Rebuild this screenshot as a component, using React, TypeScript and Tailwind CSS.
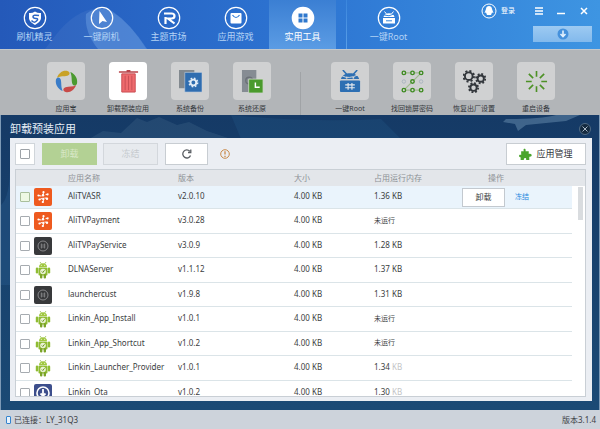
import React from 'react';

interface AppRow {
  name: string;
  version: string;
  memory: string | null;
  icon: 'ali' | 'dark' | 'android' | 'ota';
  selected?: boolean;
  faded?: boolean;
}

const rows: AppRow[] = [
  { name: 'AliTVASR', version: 'v2.0.10', memory: '1.36', icon: 'ali', selected: true },
  { name: 'AliTVPayment', version: 'v3.0.28', memory: null, icon: 'ali' },
  { name: 'AliTVPayService', version: 'v3.0.9', memory: '1.28', icon: 'dark' },
  { name: 'DLNAServer', version: 'v1.1.12', memory: '1.37', icon: 'android' },
  { name: 'launchercust', version: 'v1.9.8', memory: '1.31', icon: 'dark' },
  { name: 'Linkin_App_Install', version: 'v1.0.1', memory: null, icon: 'android' },
  { name: 'Linkin_App_Shortcut', version: 'v1.0.2', memory: null, icon: 'android' },
  { name: 'Linkin_Launcher_Provider', version: 'v1.0.1', memory: '1.34', icon: 'android', faded: true },
  { name: 'Linkin_Ota', version: 'v1.0.2', memory: '1.30', icon: 'ota', faded: true },
];

const RootRobot = () => (
  <>
    <path d="M2 9.500c1-4 5-6 9.500-6s8.500 2 9.500 6z" fill="currentColor" />
    <path d="M4 0l4 4.500M19 0l-4 4.500" stroke="currentColor" strokeWidth="1.600" />
    <path d="M3 6q7 4 17-1" stroke="#d4d6d8" fill="none" />
    <circle cx="8" cy="8" r="1" fill="#d4d6d8" />
    <circle cx="15" cy="8" r="1" fill="#d4d6d8" />
    <rect x="1" y="11" width="21" height="12" rx="1" fill="currentColor" />
    <path d="M9.500 13.500v7M13.500 13.500v7M6.500 15.500h10M6.500 18.500h10" stroke="#e4e8ec" strokeWidth="1.200" />
  </>
);

const Gear = ({ x, y, r }: { x: number; y: number; r: number }) => (
  <g transform={`translate(${x} ${y})`} stroke="#33373c" fill="none">
    <circle r={r} strokeWidth="2" />
    <circle r={r + 1.5} strokeWidth="2" strokeDasharray={`${((r + 1.5) * Math.PI) / 8} ${((r + 1.5) * Math.PI) / 8}`} />
  </g>
);

const tabs = [
  {
    label: '刷机精灵',
    icon: (
      <>
        <path d="M12 5.500q3 2 6 1.500v5c0 3-3 5-6 7-3-2-6-4-6-7V7q3 .500 6-1.500z" fill="#fff" />
        <path d="M16 9.500q-6-1-6 1t3 2 .500 2.500-5-.500" stroke="#2c66c4" strokeWidth="1.500" fill="none" />
      </>
    ),
  },
  { label: '一键刷机', icon: <path d="M9.500 5l7.500 11-4.500-1-3.500 3z" fill="#fff" /> },
  {
    label: '主题市场',
    icon: <path d="M7 7.500h7.500q3 0 3 2.500t-3 2.500H11l6.500 5M8.500 18v-7" stroke="#fff" strokeWidth="2.200" fill="none" />,
  },
  {
    label: '应用游戏',
    icon: (
      <>
        <rect x="6.500" y="7" width="11" height="10.500" rx="1" fill="#fff" />
        <path d="M8.500 9q3.500 5 7 0" stroke="#2f7ad6" strokeWidth="1.200" fill="none" />
      </>
    ),
  },
  {
    label: '实用工具',
    active: true,
    icon: <path d="M7.500 7.500h4v4h-4zM12.500 7.500h4v4h-4zM7.500 12.500h4v4h-4zM12.500 12.500h4v4h-4z" fill="#2f78cd" />,
  },
];

const rootTabIcon = (
  <>
    <path d="M6.500 11c1-5 10-5 11 0zM6 12h12v5.500H6z" fill="#fff" />
    <path d="M7.500 5.500l2 2.500M16.500 5.500l-2 2.500" stroke="#fff" />
    <path d="M7 9q5 2 10-1M9 14.800h6" stroke="#3586dc" fill="none" />
  </>
);

const NavTab = ({ label, icon, active }: { label: string; icon: React.ReactNode; active?: boolean }) => (
  <button
    className={
      active
        ? 'flex w-[67px] flex-col items-center bg-gradient-to-b from-[#3b7fd3] to-[#5b9ce4] pt-1.5 text-white'
        : 'flex w-[67px] flex-col items-center pt-1.5 text-[#b3d2f5]'
    }
  >
    <svg viewBox="0 0 24 24" className="size-6">
      <circle cx="12" cy="12" r="10.700" fill={active ? '#fff' : 'none'} stroke="#fff" strokeWidth="1.200" />
      {icon}
    </svg>
    <span className="text-[9px] leading-[14px]">{label}</span>
  </button>
);

const toolsLeft = [
  {
    label: '应用宝',
    icon: (
      <>
        <path d="M2 8C4 3 8 0 13 1c3 1 3 4 0 5-4 1-7 0-11 2z" fill="#c9a227" />
        <path d="M16 2c5 2 8 7 7 12-1 3-4 3-5 0-1-4 0-7-2-12z" fill="#4b9a30" />
        <path d="M22 16c-2 5-6 8-11 7-3-1-3-4 0-5 4-1 7 0 11-2z" fill="#c84a48" />
        <path d="M8 22C3 20 0 15 1 10c1-3 4-3 5 0 1 4 0 7 2 12z" fill="#3a7cc8" />
      </>
    ),
  },
  {
    label: '卸载预装应用',
    active: true,
    icon: (
      <>
        <path d="M2 2h20M10 .800h4" stroke="#b9444a" strokeWidth="1.500" />
        <path d="M5 4h14v19H5z" fill="#ee6a6d" stroke="#c94c51" />
        <path d="M8.500 6v15M12 6v15M15.500 6v15" stroke="#c85055" />
      </>
    ),
  },
  {
    label: '系统备份',
    icon: (
      <>
        <path d="M0 0h16v19H0z" fill="#82898f" />
        <path d="M6 2.500h18V23H6z" fill="#2f6db0" stroke="#c8d4e0" strokeWidth=".600" />
        <circle cx="15" cy="13" r="3" stroke="#e2ecf6" strokeWidth="2" fill="none" />
        <circle cx="15" cy="13" r="4.500" stroke="#e2ecf6" strokeWidth="1.500" strokeDasharray="1.800 1.730" fill="none" />
      </>
    ),
  },
  {
    label: '系统还原',
    icon: (
      <>
        <path d="M1 0h15v23H1z" fill="#868c93" />
        <circle cx="8.500" cy="11" r="3.500" stroke="#6b7177" strokeWidth="1.500" fill="none" />
        <path d="M8 9.500h15V24H8z" fill="#4a9a2c" stroke="#d5dccf" strokeWidth=".800" />
        <path d="M15 13v5h4.500" stroke="#fff" strokeWidth="1.500" fill="none" />
      </>
    ),
  },
];

const lockDots = [
  [3, 3], [12, 3], [21, 3], [12, 12], [3, 21], [12, 21], [21, 21],
];

const toolsRight = [
  { label: '一键Root', icon: <g color="#2d6fb3"><RootRobot /></g> },
  {
    label: '找回锁屏密码',
    icon: (
      <>
        <path d="M3 3h18L3 21h18" stroke="#9fba8f" strokeWidth="1.300" fill="none" />
        {lockDots.map(([x, y]) => (
          <circle key={`${x}-${y}`} cx={x} cy={y} r="1.800" stroke="#3f8b22" strokeWidth="1.500" fill="#d4d6d4" />
        ))}
        <circle cx="3" cy="12" r="1.800" stroke="#a9b4bf" fill="none" />
        <circle cx="21" cy="12" r="1.800" stroke="#a9b4bf" fill="none" />
      </>
    ),
  },
  {
    label: '恢复出厂设置',
    icon: (
      <>
        <Gear x={6} y={6.500} r={4} />
        <Gear x={18.500} y={9} r={3.300} />
        <Gear x={11} y={18.500} r={3.300} />
      </>
    ),
  },
  {
    label: '重启设备',
    icon: (
      <path
        d="M12 1v6M12 17v6M1 12h6M17 12h6M4 4l4.500 4.500M15.500 15.500L20 20M20 4l-4.500 4.500M8.500 15.500L4 20"
        stroke="#4d9126"
        strokeWidth="1.700"
      />
    ),
  },
];

const Tool = ({ label, icon, active }: { label: string; icon: React.ReactNode; active?: boolean }) => (
  <button className="flex w-[62px] flex-col items-center pt-3 text-[#33373b]">
    <span
      className={
        active
          ? 'flex size-[38px] items-center justify-center rounded bg-white'
          : 'flex size-[38px] items-center justify-center rounded bg-[#d0d1d2]'
      }
    >
      <svg viewBox="0 0 24 24" fill="none" className="size-[23px]">{icon}</svg>
    </span>
    <span className="mt-1 whitespace-nowrap text-[7px] leading-[10px]">{label}</span>
  </button>
);

const AppIcon = ({ kind }: { kind: AppRow['icon'] }) => {
  if (kind === 'ali') {
    return (
      <svg viewBox="0 0 18 18" className="block size-[18px]">
        <rect width="18" height="18" rx="2" fill="#ee5a1f" />
        <path d="M4.500 7.500l2.500.500M9.500 4.500L9 7M12 6.500l2-.500M5.500 11.500l2.500-1M11 10l2.500.500M9.500 11.500l-.500 3" stroke="#fff" strokeLinecap="round" />
        <g fill="#fff">
          <circle cx="4.500" cy="7.500" r="1.100" />
          <circle cx="9.500" cy="4.200" r="1.100" />
          <circle cx="9" cy="7.300" r="1.200" />
          <circle cx="13.500" cy="6.500" r="1.100" />
          <circle cx="13" cy="10.700" r="1.200" />
          <circle cx="8.800" cy="14" r="1.100" />
          <circle cx="9.300" cy="11" r="1.200" />
          <circle cx="5.500" cy="11.500" r="1.100" />
        </g>
      </svg>
    );
  }
  if (kind === 'dark') {
    return (
      <svg viewBox="0 0 18 18" fill="none" className="block size-[18px]">
        <rect width="18" height="18" rx="2" fill="#38393b" />
        <circle cx="9" cy="9" r="5" stroke="#9a9b9d" strokeWidth=".800" />
        <path d="M7.500 6.500v5M10.500 6.500v5M6.500 8h5M6.500 10h5" stroke="#8a8b8d" strokeWidth=".700" />
      </svg>
    );
  }
  if (kind === 'android') {
    return (
      <svg viewBox="0 0 18 18" className="block size-[18px]">
        <path d="M6 1l1.500 2M12 1l-1.500 2" stroke="#8ab33a" strokeWidth=".700" />
        <path d="M5 6c0-5 8-5 8 0z" fill="#a0c840" />
        <rect x="4.500" y="6.500" width="9" height="8" rx="1" fill="#8fbc32" />
        <rect x="1.800" y="6.500" width="2.400" height="6" rx="1.200" fill="#8fbc32" />
        <rect x="13.800" y="6.500" width="2.400" height="6" rx="1.200" fill="#8fbc32" />
        <rect x="6" y="13" width="2.400" height="4.500" rx="1" fill="#7ba428" />
        <rect x="9.600" y="13" width="2.400" height="4.500" rx="1" fill="#7ba428" />
        <circle cx="9" cy="10.500" r="2.800" fill="#e9f2d4" />
        <path d="M7.800 10.500l1 1 1.700-2.200" stroke="#6b9420" fill="none" />
        <circle cx="7.300" cy="4.200" r=".500" fill="#fff" />
        <circle cx="10.700" cy="4.200" r=".500" fill="#fff" />
      </svg>
    );
  }
  return (
    <svg viewBox="0 0 18 18" className="block size-[18px]">
      <rect width="18" height="18" rx="2" fill="#3d4f8c" />
      <circle cx="9" cy="9" r="6" fill="none" stroke="#fff" strokeWidth="1.600" />
      <path d="M9 5v7M6.500 9.500L9 12l2.500-2.500" stroke="#fff" strokeWidth="1.800" fill="none" />
    </svg>
  );
};

const Header = () => (
  <header className="relative flex h-[49px] shrink-0 overflow-hidden bg-gradient-to-r from-[#2459b9] via-[#2d74d2] to-[#3e95e2]">
    <svg viewBox="0 0 600 49" preserveAspectRatio="none" className="absolute inset-0 size-full">
      <path d="M55 36Q75 10 98 8q24 2 48 41H45z" fill="#fff" opacity=".05" />
      <path d="M86 14q12-9 26-3 18 12 35 38H98Q84 32 86 14z" fill="#8fbcf2" opacity=".3" />
    </svg>
    <nav className="relative flex pl-px">
      {tabs.map((tab) => (
        <NavTab key={tab.label} {...tab} />
      ))}
      <span className="ml-2.5 mr-2 w-px bg-gradient-to-b from-[#3a86dd] to-[#5ba0e8]" />
      <NavTab label="一键Root" icon={rootTabIcon} />
    </nav>
    <div className="relative ml-auto mr-2 flex flex-col items-end">
      <div className="flex h-[22px] items-center text-white">
        <button className="mr-5 flex items-center gap-1 text-[7px]">
          <svg viewBox="0 0 16 16" className="size-4">
            <circle cx="8" cy="8" r="7" fill="none" stroke="#fff" />
            <path d="M5 6c0-4 6-4 6 0l1.500 4-1.500-.500-1 2.500H6L5 9.500l-1.500.500z" fill="#fff" />
          </svg>
          登录
        </button>
        <button aria-label="菜单" className="mr-3.5">
          <svg viewBox="0 0 8 8" className="size-2"><path d="M0 1h8M0 4h8M0 7h8" stroke="#fff" strokeWidth="1.500" /></svg>
        </button>
        <button aria-label="最小化" className="mr-[15px]">
          <svg viewBox="0 0 8 8" className="size-2"><path d="M0 6.500h8" stroke="#fff" strokeWidth="1.500" /></svg>
        </button>
        <button aria-label="关闭" className="mr-1">
          <svg viewBox="0 0 8 8" className="size-2"><path d="M1 1l6 6M7 1L1 7" stroke="#fff" strokeWidth="1.500" /></svg>
        </button>
      </div>
      <button aria-label="下载" className="mt-1 flex h-4 w-[59px] items-center justify-center bg-gradient-to-b from-[#9dcaf2] to-[#82b9ec]">
        <svg viewBox="0 0 12 12" className="size-3">
          <circle cx="6" cy="6" r="5.500" fill="#4591dc" />
          <path d="M6 2.500v6M3.500 6L6 8.500 8.500 6" stroke="#e2f0fd" strokeWidth="1.600" fill="none" />
        </svg>
      </button>
    </div>
  </header>
);

const cell = 'border-b border-[#dbe4e8] p-0';
const textCell = 'border-b border-[#dbe4e8] p-0 pb-0.5';

const AppTable = () => (
  <div className="relative mt-1 min-h-0 flex-1 overflow-hidden border border-[#c9cfd5] bg-white">
    <table className="w-full table-fixed border-separate border-spacing-0 text-left text-[8px] leading-[8px] text-[#3b3e41]">
      <colgroup>
        <col className="w-[17px]" />
        <col className="w-[35px]" />
        <col />
        <col className="w-[116px]" />
        <col className="w-20" />
        <col className="w-[88px]" />
        <col className="w-[110px]" />
        <col className="w-[13px]" />
      </colgroup>
      <thead className="bg-[#e3e6ea] text-[#8d9196]">
        <tr className="h-4">
          <th className="p-0" />
          <th className="p-0" />
          <th className="p-0 font-normal">应用名称</th>
          <th className="p-0 font-normal">版本</th>
          <th className="p-0 font-normal">大小</th>
          <th className="p-0 font-normal">占用运行内存</th>
          <th className="p-0 pl-[26px] font-normal">操作</th>
          <th className="p-0" />
        </tr>
      </thead>
      <tbody>
        {rows.map((row) => (
          <tr key={row.name} className={row.selected ? 'h-[23px] bg-[#eaf4fc]' : 'odd:h-[24px] even:h-[25px]'}>
            <td className={`${cell} pl-1`}>
              <input
                type="checkbox"
                aria-label={row.name}
                className={
                  row.selected
                    ? 'block size-2.5 appearance-none rounded-[1px] border border-[#a9bf9c] bg-[#eef8e4]'
                    : 'block size-2.5 appearance-none rounded-[1px] border border-[#a6abb0] bg-white'
                }
              />
            </td>
            <td className={`${cell} pl-px`}><AppIcon kind={row.icon} /></td>
            <td className={textCell}>{row.name}</td>
            <td className={textCell}>{row.version}</td>
            <td className={textCell}>4.00 KB</td>
            <td className={textCell}>
              {row.memory ? (
                <>{row.memory} <span className={row.faded ? 'text-[#c2c4c6]' : ''}>KB</span></>
              ) : (
                <span className="text-[7px]">未运行</span>
              )}
            </td>
            <td className={cell}>
              {row.selected && (
                <div className="flex items-center gap-2.5">
                  <button className="h-[19px] w-[43px] border border-[#c3c9cf] bg-white text-[8px]">卸载</button>
                  <button className="text-[7px] text-[#2186dc]">冻结</button>
                </div>
              )}
            </td>
            <td className="bg-white p-0" />
          </tr>
        ))}
      </tbody>
    </table>
    <div className="absolute right-0.5 top-[17px] h-[33px] w-[5px] bg-[#d9dcdf]" />
  </div>
);

export default function App() {
  return (
    <div className="flex h-screen min-w-[600px] flex-col bg-[#b4b7ba] font-['Noto_Sans','Noto_Sans_CJK_SC',sans-serif]">
      <Header />
      <div className="flex h-[66px] shrink-0 border-t border-[#c3c8cc] bg-[#b2b5b8] pl-[35px]">
        {toolsLeft.map((tool) => (
          <Tool key={tool.label} {...tool} />
        ))}
        <span className="ml-[17px] mr-[18px] mt-[22px] w-px bg-[#a0a3a6]" />
        {toolsRight.map((tool) => (
          <Tool key={tool.label} {...tool} />
        ))}
      </div>
      <main className="relative flex min-h-0 flex-1 flex-col border-x border-[#7d9ab6] bg-gradient-to-b from-[#153a66] to-[#1b4a75] pb-[9px] pl-[9px] pr-[7px]">
        <svg viewBox="0 0 598 295" preserveAspectRatio="none" className="absolute inset-0 size-full">
          <path d="M88 24l14-8 18 2 16-15 10 4 12-5 18 8 12-3 18 9 24 8z" fill="#6d93ae" opacity=".16" />
          <path d="M230 0q80 8 150 4l20 20H240z" fill="#2b6a9c" opacity=".2" />
          <path d="M505 4q35 0 50-4l24 0-14 6-40 4-8 6-3-7-12-2z" fill="#7fa6c4" opacity=".4" />
          <path d="M0 90q10-8 9-50v130H0z" fill="#2c5f91" opacity=".35" />
        </svg>
        <div className="relative flex h-[23px] items-center justify-between">
          <h1 className="pt-1 text-[11px] leading-4 text-[#e6eef6]">卸载预装应用</h1>
          <button aria-label="关闭" className="mr-px mt-1 flex size-3 items-center justify-center rounded-full border border-[#4f6a84] bg-[#142a40]">
            <svg viewBox="0 0 8 8" className="size-2"><path d="M1.500 1.500l5 5M6.500 1.500l-5 5" stroke="#a9b8c6" /></svg>
          </button>
        </div>
        <section className="relative flex min-h-0 flex-1 flex-col bg-[#ebeef3] pb-1 pl-[5px] pr-1.5 pt-[5px]">
          <div className="flex h-[22px] items-stretch">
            <label className="flex w-5 items-center justify-center border border-[#d0d5da] bg-white">
              <input type="checkbox" aria-label="全选" className="size-2.5 appearance-none rounded-[1px] border border-[#9da2a7]" />
            </label>
            <button className="ml-[7px] w-[55px] bg-[#b3d194] text-[9px] text-[#d9e8c8]">卸载</button>
            <button className="ml-1.5 w-[55px] border border-[#d3d7dc] bg-[#e7eaee] text-[9px] text-[#c6cacf]">冻结</button>
            <button aria-label="刷新" className="ml-[7px] flex w-[43px] items-center justify-center border border-[#c8cdd2] bg-white">
              <svg viewBox="0 0 10 10" fill="none" className="size-2.5">
                <path d="M8.500 6.500A4 4 0 1 1 7.800 2.300M8.800.500v3H6" stroke="#5b5f64" strokeWidth="1.300" />
              </svg>
            </button>
            <svg viewBox="0 0 10 10" fill="none" className="ml-3 size-2.5 self-center">
              <circle cx="5" cy="5" r="4.300" stroke="#c98a4b" />
              <path d="M5 2.300v3.200M5 6.700v1.200" stroke="#c9803b" strokeWidth="1.200" />
            </svg>
            <button className="ml-auto flex w-20 items-center justify-center gap-1 border border-[#c8cdd2] bg-white text-[9px] text-[#33373b]">
              <svg viewBox="0 0 24 24" className="size-[13px]" fill="#4aa52c">
                <path d="M4 6h5C6 0 14 0 12 6h6v5c6-3 8 6 1 5v6h-6c2-5-5-5-4 0H3v-5c-4 1-4-6 1-4z" />
              </svg>
              应用管理
            </button>
          </div>
          <AppTable />
        </section>
      </main>
      <footer className="flex h-[19px] shrink-0 items-center justify-between bg-[#cdd3db] pl-1.5 pr-1 text-[8px] text-[#3c4045]">
        <span className="flex items-center gap-[3px]">
          <span className="h-2 w-[5px] rounded-[1px] border border-[#3584cf] bg-[#e8f2fb]" />
          已连接：LY_31Q3
        </span>
        <span>版本3.1.4</span>
      </footer>
    </div>
  );
}
